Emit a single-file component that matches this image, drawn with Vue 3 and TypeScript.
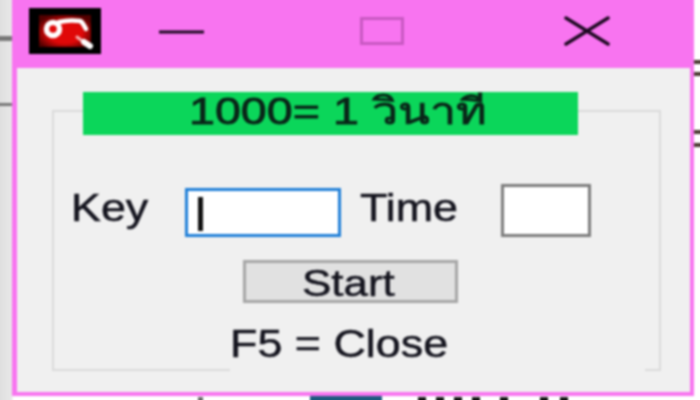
<script setup lang="ts">
const rightMarks = [64, 76, 134, 147]
const bottomMarks = [422, 440, 458, 476, 504, 544, 564]
</script>

<template>
  <div class="viewport">
    <div class="desktop">
      <span class="mark left-a" />
      <span class="mark left-b" />
      <span v-for="y in rightMarks" :key="y" class="side-mark" :style="{ top: y + 'px' }" />
      <span class="taskbar" />
      <span class="tick" />
      <span v-for="x in bottomMarks" :key="x" class="foot-mark" :style="{ left: x + 'px' }" />

      <div class="window">
        <div class="titlebar">
          <svg class="app-icon" viewBox="0 0 72 46">
            <defs>
              <radialGradient id="glow" cx="50%" cy="55%" r="60%">
                <stop offset="0.55" stop-color="#e00808" />
                <stop offset="1" stop-color="#500000" />
              </radialGradient>
            </defs>
            <rect width="72" height="46" fill="#000" />
            <rect x="10" y="7" width="52" height="32" fill="url(#glow)" />
            <path d="M30 14c8-2 14-2 21-1 3 1 4 5 6 8" fill="none" stroke="#fff" stroke-width="4.5" stroke-linecap="round" />
            <circle cx="24" cy="21" r="6.5" fill="#e00808" stroke="#fff" stroke-width="5.5" />
            <path d="M48 29l4 3" stroke="#f4b0b0" stroke-width="3" stroke-linecap="round" />
            <path d="M55 34l6 4" stroke="#fff" stroke-width="6" stroke-linecap="round" />
          </svg>
          <svg class="btn btn-min" viewBox="0 0 45 6"><path d="M0 3h45" stroke="#1c0820" stroke-width="3" /></svg>
          <svg class="btn btn-max" viewBox="0 0 44 28"><rect x="1.5" y="1.5" width="41" height="25" fill="none" stroke="#c858c2" stroke-width="3" /></svg>
          <svg class="btn btn-close" viewBox="0 0 46 30"><path d="M2 2l42 26M44 2L2 28" stroke="#1c0820" stroke-width="3.5" stroke-linecap="round" /></svg>
        </div>
        <div class="client">
          <div class="group">
            <div class="banner"><span class="stretch">1000= 1 วินาที</span></div>
            <div class="fields">
              <label class="label key"><span class="stretch">Key</span></label>
              <div class="input focused"><span class="caret" /></div>
              <label class="label time"><span class="stretch">Time</span></label>
              <div class="input small" />
            </div>
            <button class="start"><span class="stretch">Start</span></button>
            <div class="hint"><span class="stretch">F5 = Close</span></div>
          </div>
        </div>
      </div>
    </div>
  </div>
</template>

<style>
html,
body {
  margin: 0;
  background: #fff;
}
</style>

<style scoped>
.viewport {
  width: 700px;
  height: 400px;
  overflow: hidden;
}

/* 4px of bleed on every side so the blur doesn't fade at the page edge */
.desktop {
  position: relative;
  width: 708px;
  height: 408px;
  margin: -4px 0 0 -4px;
  padding: 4px 0 0 16px;
  box-sizing: border-box;
  overflow: hidden;
  background: linear-gradient(to right, #dcdcdc 0, #e8e8e8 16px, #fff 17px);
  font-family: "Liberation Sans", "Noto Sans", sans-serif;
  color: #14141e;
  filter: blur(0.9px);
}

.stretch {
  display: inline-block;
  transform: scaleX(1.18);
  transform-origin: left center;
  -webkit-text-stroke: 0.5px currentColor;
}

.mark {
  position: absolute;
  left: 0;
  width: 16px;
  background: #777;
}
.left-a {
  top: 40px;
  height: 5px;
}
.left-b {
  top: 107px;
  height: 3px;
}
.side-mark {
  position: absolute;
  left: 698px;
  width: 10px;
  height: 4px;
  background: #4a3a30;
}
.taskbar {
  position: absolute;
  left: 314px;
  top: 400px;
  width: 72px;
  height: 8px;
  background: #1d5a80;
}
.tick {
  position: absolute;
  left: 202px;
  top: 401px;
  width: 5px;
  height: 7px;
  background: #666;
}
.foot-mark {
  position: absolute;
  top: 401px;
  width: 8px;
  height: 7px;
  background: #111;
}

.window {
  position: relative;
  width: 682px;
  height: 396px;
  box-sizing: border-box;
  border: solid #f874f0;
  border-width: 0 4px 4px 5px;
  background: #f0f0f0;
  display: flex;
  flex-direction: column;
}

.titlebar {
  height: 72px;
  margin: -4px -4px 0 -5px;
  padding-top: 4px;
  box-sizing: border-box;
  background: #f874f0;
  display: flex;
  align-items: flex-start;
  flex-shrink: 0;
}
.app-icon {
  width: 72px;
  height: 46px;
  margin: 8px 0 0 17px;
  flex-shrink: 0;
}
.btn {
  flex-shrink: 0;
}
.btn-min {
  width: 45px;
  height: 6px;
  margin: 29px 0 0 58px;
}
.btn-max {
  width: 44px;
  height: 28px;
  margin: 17px 0 0 156px;
}
.btn-close {
  width: 46px;
  height: 30px;
  margin: 16px 0 0 160px;
}

.client {
  padding: 42px 0 0 35px;
}
.group {
  width: 609px;
  height: 261px;
  box-sizing: border-box;
  border: 2px solid #dadada;
  display: flex;
  flex-direction: column;
}
.group > * {
  flex-shrink: 0;
}

.banner {
  width: 495px;
  height: 43px;
  margin: -20px 0 0 29px;
  padding-left: 106px;
  box-sizing: border-box;
  background: #0bd65a;
  font-size: 37px;
  line-height: 40px;
  color: #0a2418;
  white-space: nowrap;
}
.banner .stretch {
  transform: scaleX(1.26);
  -webkit-text-stroke: 0.8px currentColor;
}

.fields {
  display: flex;
  align-items: flex-end;
  margin-top: 49px;
  height: 53px;
}
.label {
  font-size: 38px;
  line-height: 46px;
  margin-bottom: 6px;
}
.key {
  margin-left: 17px;
  width: 114px;
}
.time {
  margin-left: 19px;
  width: 141px;
}
.input {
  box-sizing: border-box;
  background: #fff;
  flex-shrink: 0;
}
.focused {
  width: 156px;
  height: 49px;
  border: 3px solid #1f7fd8;
  padding: 6px 0 0 10px;
}
.small {
  width: 90px;
  height: 53px;
  border: 3px solid #7c7c7c;
}
.caret {
  display: block;
  width: 5px;
  height: 34px;
  background: #111;
}

.start {
  width: 215px;
  height: 43px;
  margin: 23px 0 0 189px;
  padding: 3px 0 0 56px;
  box-sizing: border-box;
  border: 3px solid #a6a6a6;
  background: #e1e1e1;
  color: inherit;
  font: inherit;
  font-size: 36px;
  line-height: 36px;
  text-align: left;
}
.start .stretch {
  transform: scaleX(1.22);
}

.hint {
  width: 415px;
  height: 50px;
  margin: 19px 0 0 176px;
  background: #f0f0f0;
  font-size: 38px;
  line-height: 44px;
  white-space: nowrap;
}
</style>
